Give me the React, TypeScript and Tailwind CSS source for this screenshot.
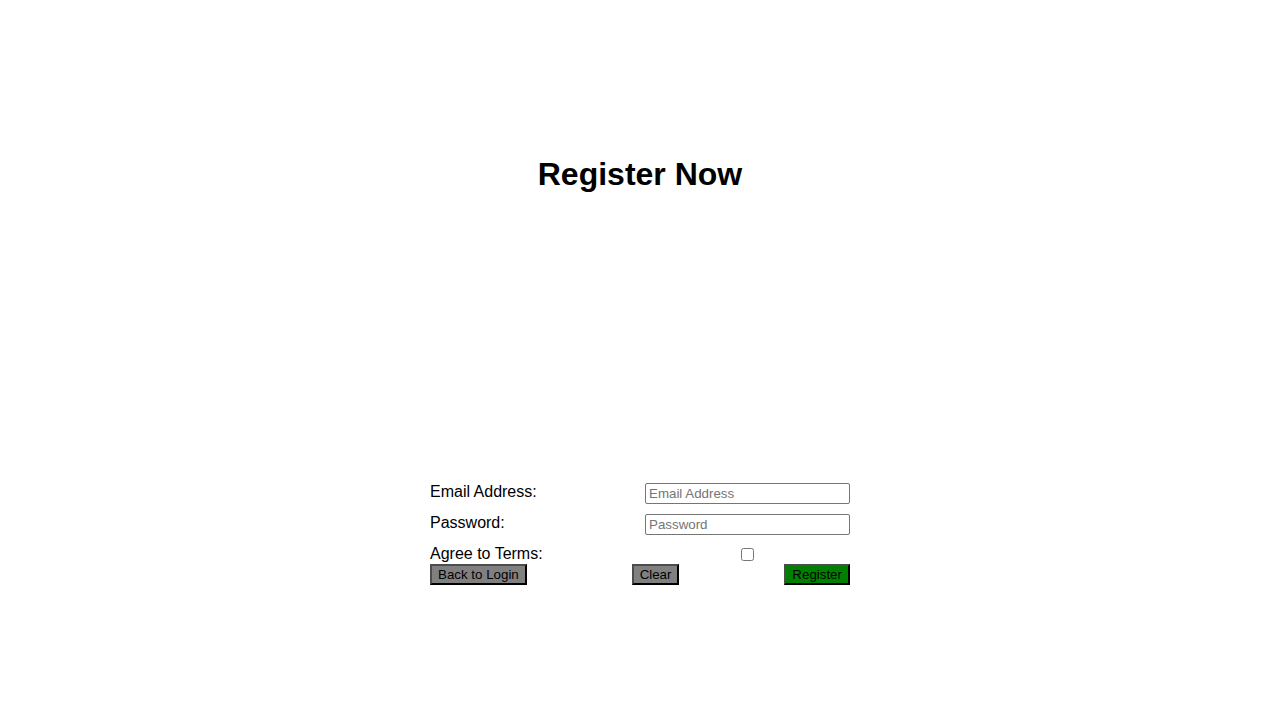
import React, { useState } from 'react';

const btn =
  'h-[21px] px-[6px] text-[13.333px] leading-none text-black border-2 border-t-[#4d4d4d] border-l-[#4d4d4d] border-b-black border-r-black';

export default function App() {
  const [email, setEmail] = useState('');
  const [password, setPassword] = useState('');
  const [agree, setAgree] = useState(false);

  const clear = () => {
    setEmail('');
    setPassword('');
    setAgree(false);
  };

  return (
    <div className="min-h-screen bg-white text-black font-['Liberation_Sans',Arial,sans-serif]">
      <div className="pt-[156px] text-center">
        <h1 className="text-[32px] leading-[37px] font-bold">Register Now</h1>
      </div>

      <form className="w-[420px] mx-auto mt-[290px]" onSubmit={e => e.preventDefault()}>
        <div className="flex justify-between items-start h-[21px]">
          <label className="text-base leading-[18px]">Email Address:</label>
          <input
            type="email"
            value={email}
            onChange={e => setEmail(e.target.value)}
            placeholder="Email Address"
            className="w-[205px] h-[21px] px-[3px] text-[13.333px] border border-[#767676] rounded-[2px] placeholder:text-[#757575] outline-none"
          />
        </div>
        <div className="flex justify-between items-start h-[21px] mt-[10px]">
          <label className="text-base leading-[18px]">Password:</label>
          <input
            type="password"
            value={password}
            onChange={e => setPassword(e.target.value)}
            placeholder="Password"
            className="w-[205px] h-[21px] px-[3px] text-[13.333px] border border-[#767676] rounded-[2px] placeholder:text-[#757575] outline-none"
          />
        </div>
        <div className="flex justify-between items-start h-[18px] mt-[10px]">
          <label className="text-base leading-[18px]">Agree to Terms:</label>
          <div className="w-[205px] flex justify-center">
            <input
              type="checkbox"
              checked={agree}
              onChange={e => setAgree(e.target.checked)}
              className="w-[13px] h-[13px] mt-[3px]"
            />
          </div>
        </div>
        <div className="flex justify-between items-center mt-[1px]">
          <button type="button" className={`${btn} bg-[#808080]`}>Back to Login</button>
          <button type="button" onClick={clear} className={`${btn} bg-[#808080]`}>Clear</button>
          <button type="submit" className={`${btn} bg-[#008000]`}>Register</button>
        </div>
      </form>
    </div>
  );
}
